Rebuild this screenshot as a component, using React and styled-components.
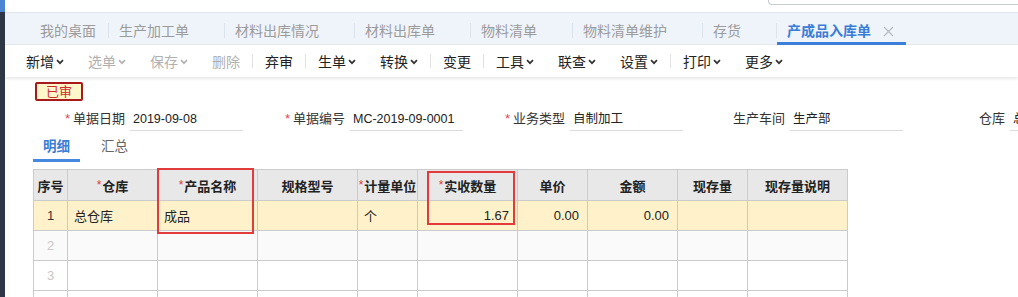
import React from "react";
import styled, { createGlobalStyle } from "styled-components";

const FONT = `"Liberation Sans", "Noto Sans CJK SC", sans-serif`;

const tabs = [
  { label: "我的桌面", fixed: true },
  { label: "生产加工单" },
  { label: "材料出库情况" },
  { label: "材料出库单" },
  { label: "物料清单" },
  { label: "物料清单维护" },
  { label: "存货" },
  { label: "产成品入库单", active: true },
];

// sep: 前面加分隔线
const tools = [
  { label: "新增", menu: true },
  { label: "选单", menu: true, disabled: true },
  { label: "保存", menu: true, disabled: true },
  { label: "删除", disabled: true },
  { label: "弃审", sep: true },
  { label: "生单", menu: true, sep: true },
  { label: "转换", menu: true },
  { label: "变更", sep: true },
  { label: "工具", menu: true, sep: true },
  { label: "联查", menu: true },
  { label: "设置", menu: true },
  { label: "打印", menu: true, sep: true },
  { label: "更多", menu: true },
];

const fields = [
  { label: "单据日期", value: "2019-09-08", required: true },
  { label: "单据编号", value: "MC-2019-09-0001", required: true },
  { label: "业务类型", value: "自制加工", required: true },
  { label: "生产车间", value: "生产部" },
  { label: "仓库", value: "总仓库" },
];

const columns = [
  { title: "序号", width: 34 },
  { title: "仓库", width: 90, required: true },
  { title: "产品名称", width: 100, required: true },
  { title: "规格型号", width: 100 },
  { title: "计量单位", width: 60, required: true },
  { title: "实收数量", width: 100, required: true },
  { title: "单价", width: 70 },
  { title: "金额", width: 90 },
  { title: "现存量", width: 70 },
  { title: "现存量说明", width: 100 },
];

const rows = [
  ["1", "总仓库", "成品", "", "个", "1.67", "0.00", "0.00", "", ""],
  ["2", "", "", "", "", "", "", "", "", ""],
  ["3", "", "", "", "", "", "", "", "", ""],
  ["4", "", "", "", "", "", "", "", "", ""],
];

const numericCols = [5, 6, 7];

const Chevron = ({ color }) => (
  <svg width="8" height="6" viewBox="0 0 8 6">
    <path d="M1 1.2 L4 4.2 L7 1.2" fill="none" stroke={color} strokeWidth="1.7" />
  </svg>
);

const CloseX = () => (
  <svg width="11" height="11" viewBox="0 0 11 11">
    <path d="M1 1 L10 10 M10 1 L1 10" stroke="#b8bcc2" strokeWidth="1.3" />
  </svg>
);

export default function App() {
  return (
    <>
      <GlobalStyle />
      <Page>
        <SideStrip />
        <Main>
          <TopStrip>
            <SearchEdge />
          </TopStrip>

          <TabBar>
            {tabs.map((t, i) => (
              <React.Fragment key={t.label}>
                {i > 0 && <TabSep />}
                <Tab $active={t.active}>
                  {t.label}
                  {!t.fixed && (
                    <TabClose $show={t.active}>
                      <CloseX />
                    </TabClose>
                  )}
                </Tab>
              </React.Fragment>
            ))}
          </TabBar>

          <Toolbar>
            {tools.map((t) => (
              <React.Fragment key={t.label}>
                {t.sep && <ToolSep />}
                <ToolItem $disabled={t.disabled}>
                  {t.label}
                  {t.menu && <Chevron color={t.disabled ? "#b4b4b4" : "#333"} />}
                </ToolItem>
              </React.Fragment>
            ))}
          </Toolbar>

          <Content>
            <Stamp>已审</Stamp>

            <FormRow>
              {fields.map((f) => (
                <Field key={f.label}>
                  <FieldLabel>
                    {f.required && <Star>*</Star>}
                    {f.label}
                  </FieldLabel>
                  <FieldValue>{f.value}</FieldValue>
                </Field>
              ))}
            </FormRow>

            <DetailTabs>
              <DetailTab $active>明细</DetailTab>
              <DetailTab>汇总</DetailTab>
            </DetailTabs>

            <GridWrap>
              <Grid>
                <colgroup>
                  {columns.map((c) => (
                    <col key={c.title} style={{ width: c.width }} />
                  ))}
                </colgroup>
                <thead>
                  <tr>
                    {columns.map((c) => (
                      <HeadCell key={c.title}>
                        {c.required && <HeadStar>*</HeadStar>}
                        {c.title}
                      </HeadCell>
                    ))}
                  </tr>
                </thead>
                <tbody>
                  {rows.map((r, ri) => (
                    <BodyRow key={ri} $index={ri}>
                      {r.map((v, ci) =>
                        ci === 0 ? (
                          <IndexCell key={ci} $muted={ri > 0}>
                            {v}
                          </IndexCell>
                        ) : (
                          <Cell key={ci} $num={numericCols.includes(ci)}>
                            {v}
                          </Cell>
                        )
                      )}
                    </BodyRow>
                  ))}
                </tbody>
              </Grid>
              <Mark $left={124} $top={-1} $w={97} $h={66} />
              <Mark $left={394} $top={2} $w={88} $h={54} />
            </GridWrap>
          </Content>
        </Main>
      </Page>
    </>
  );
}

const GlobalStyle = createGlobalStyle`
  html, body {
    margin: 0;
    padding: 0;
    background: #fff;
    overflow: hidden;
  }
  body {
    font-family: ${FONT};
    color: #333;
  }
`;

/* ===== 框架 ===== */

const Page = styled.div`
  display: flex;
  height: 297px;
  overflow: hidden;
`;

const SideStrip = styled.div`
  width: 5px;
  flex-shrink: 0;
  background: linear-gradient(#4a84d2 0, #4a84d2 12px, #2d3745 12px);
`;

const Main = styled.div`
  flex: 1;
  min-width: 0;
  display: flex;
  flex-direction: column;

  & > * {
    flex-shrink: 0;
  }
`;

const TopStrip = styled.div`
  height: 12px;
  display: flex;
  justify-content: flex-end;
  align-items: flex-start;
`;

const SearchEdge = styled.div`
  width: 249px;
  height: 4px;
  border: 1px solid #c9cdd2;
  border-top: none;
  border-right: none;
  border-radius: 0 0 0 4px;
`;

/* ===== 页签 ===== */

const TabBar = styled.div`
  height: 33px;
  box-sizing: border-box;
  background: #eff4fb;
  border-top: 1px solid #dfe5ec;
  border-bottom: 1px solid #e4e9ef;
  display: flex;
  align-items: center;
  padding-left: 25px;
`;

const Tab = styled.div`
  height: 32px;
  box-sizing: border-box;
  padding: 7px 12px 0 10px;
  line-height: 23px;
  font-size: 14px;
  white-space: nowrap;
  display: flex;
  align-items: flex-start;
  color: ${(p) => (p.$active ? "#3a7dd8" : "#9b9b9b")};
  font-weight: ${(p) => (p.$active ? 700 : 400)};
  border-bottom: 3px solid ${(p) => (p.$active ? "#3d80dc" : "transparent")};
`;

const TabClose = styled.span`
  width: 11px;
  margin-left: 12px;
  display: flex;
  align-items: center;
  height: 23px;
  visibility: ${(p) => (p.$show ? "visible" : "hidden")};
`;

const TabSep = styled.div`
  width: 1px;
  height: 15px;
  margin-top: 3px;
  background: #dde3ea;
`;

/* ===== 工具栏 ===== */

const Toolbar = styled.div`
  height: 32px;
  display: flex;
  align-items: center;
  padding-left: 9px;
  background: #fff;
  box-shadow: 0 2px 3px rgba(0, 0, 0, 0.09);
  position: relative;
  z-index: 1;
`;

const ToolItem = styled.div`
  padding: 0 12px;
  display: flex;
  align-items: center;
  gap: 2px;
  font-size: 14px;
  white-space: nowrap;
  color: ${(p) => (p.$disabled ? "#b0b0b0" : "#222")};

  svg {
    margin-top: 1px;
  }
`;

const ToolSep = styled.div`
  width: 1px;
  height: 14px;
  background: #e0e0e0;
`;

/* ===== 表头表单 ===== */

const Content = styled.div`
  padding: 5px 0 0 28px;
  display: flex;
  flex-direction: column;
  align-items: flex-start;

  & > * {
    flex-shrink: 0;
  }
`;

const Stamp = styled.div`
  margin-left: 2px;
  width: 48px;
  height: 19px;
  box-sizing: border-box;
  border: 2px solid #a8191b;
  border-radius: 2px;
  background: #fff6c9;
  color: #cf2b2b;
  font-size: 13px;
  line-height: 15px;
  text-align: center;
`;

const FormRow = styled.div`
  margin-top: 7px;
  display: flex;
  white-space: nowrap;
`;

const Field = styled.div`
  display: flex;
  align-items: flex-start;
  margin-right: 10px;
`;

const FieldLabel = styled.div`
  width: 92px;
  text-align: right;
  font-size: 13px;
  line-height: 22px;
  color: #333;
`;

const Star = styled.span`
  color: #e0475a;
  margin-right: 3px;
`;

const FieldValue = styled.div`
  width: 113px;
  height: 23px;
  box-sizing: border-box;
  margin-left: 5px;
  padding: 1px 0 0 3px;
  border-bottom: 1px solid #dcdcdc;
  font-size: 12.5px;
  line-height: 21px;
  color: #222;
  overflow: hidden;
`;

/* ===== 明细/汇总 ===== */

const DetailTabs = styled.div`
  margin-top: 1px;
  display: flex;
  gap: 11px;
`;

const DetailTab = styled.div`
  padding: 3px 9px 0 9px;
  min-width: 29px;
  text-align: center;
  line-height: 24px;
  font-size: 13.5px;
  color: ${(p) => (p.$active ? "#3a7dd8" : "#666")};
  font-weight: ${(p) => (p.$active ? 700 : 400)};
  border-bottom: 3px solid ${(p) => (p.$active ? "#4688e0" : "transparent")};
`;

/* ===== 表格 ===== */

const GridWrap = styled.div`
  position: relative;
  margin-top: 7px;
`;

const Grid = styled.table`
  border-collapse: collapse;
  table-layout: fixed;
  width: 814px;
  font-size: 13px;
`;

const HeadCell = styled.th`
  height: 30px;
  padding: 0;
  border: 1px solid #cbcbcb;
  background: #e8e8e8;
  color: #222;
  font-weight: 700;
  text-align: center;
  white-space: nowrap;
`;

const HeadStar = styled.span`
  color: #e0353b;
  font-weight: 400;
  font-size: 12px;
  position: relative;
  top: -2px;
  margin-right: 1px;
`;

const BodyRow = styled.tr`
  background: ${(p) =>
    p.$index === 0 ? "#fff2cb" : p.$index === 1 ? "#fafafa" : "#fff"};
`;

const Cell = styled.td`
  height: 29px;
  padding: 0 8px 0 6px;
  border: 1px solid #cbcbcb;
  color: #222;
  text-align: ${(p) => (p.$num ? "right" : "left")};
  white-space: nowrap;
  overflow: hidden;
`;

const IndexCell = styled(Cell)`
  padding: 0;
  text-align: center;
  color: ${(p) => (p.$muted ? "#c8c8c8" : "#333")};
`;

const Mark = styled.div`
  position: absolute;
  left: ${(p) => p.$left}px;
  top: ${(p) => p.$top}px;
  width: ${(p) => p.$w}px;
  height: ${(p) => p.$h}px;
  box-sizing: border-box;
  border: 2px solid #e23b3b;
  pointer-events: none;
`;
